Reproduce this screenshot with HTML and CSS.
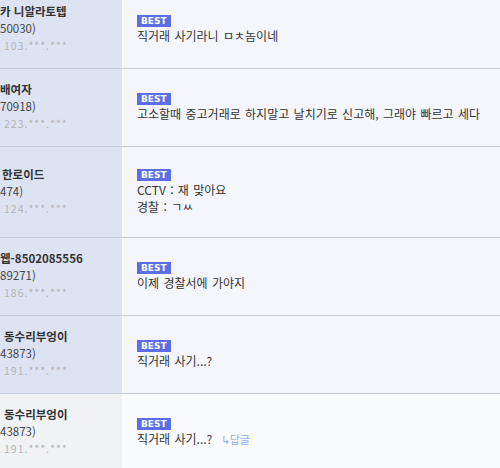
FILE: index.html
```html
<!DOCTYPE html>
<html lang="ko">
<head>
<meta charset="utf-8">
<title>댓글</title>
<link rel="stylesheet" href="styles.css">
</head>
<body>
<div class="comments">
  <div class="row">
    <div class="user">
      <div class="nick">카 니알라토텝</div>
      <div class="uid">50030)</div>
      <div class="ip">103.***.***</div>
    </div>
    <div class="body">
      <span class="badge">BEST</span>
      <p class="text">직거래 사기라니 ㅁㅊ놈이네</p>
    </div>
  </div>
  <div class="row">
    <div class="user">
      <div class="nick">배여자</div>
      <div class="uid">70918)</div>
      <div class="ip">223.***.***</div>
    </div>
    <div class="body">
      <span class="badge">BEST</span>
      <p class="text">고소할때 중고거래로 하지말고 날치기로 신고해, 그래야 빠르고 세다</p>
    </div>
  </div>
  <div class="row">
    <div class="user">
      <div class="nick nick-in">한로이드</div>
      <div class="uid">474)</div>
      <div class="ip">124.***.***</div>
    </div>
    <div class="body">
      <span class="badge">BEST</span>
      <p class="text">CCTV : 재 맞아요<br>경찰 : ㄱㅆ</p>
    </div>
  </div>
  <div class="row">
    <div class="user">
      <div class="nick">웹-8502085556</div>
      <div class="uid">89271)</div>
      <div class="ip">186.***.***</div>
    </div>
    <div class="body">
      <span class="badge">BEST</span>
      <p class="text">이제 경찰서에 가야지</p>
    </div>
  </div>
  <div class="row">
    <div class="user">
      <div class="nick nick-in2">동수리부엉이</div>
      <div class="uid">43873)</div>
      <div class="ip">191.***.***</div>
    </div>
    <div class="body">
      <span class="badge">BEST</span>
      <p class="text">직거래 사기...?</p>
    </div>
  </div>
  <div class="row plain">
    <div class="user">
      <div class="nick nick-in2">동수리부엉이</div>
      <div class="uid">43873)</div>
      <div class="ip">191.***.***</div>
    </div>
    <div class="body">
      <span class="badge">BEST</span>
      <p class="text">직거래 사기...? <a class="reply" href="#">↳답글</a></p>
    </div>
  </div>
</div>
</body>
</html>
```

FILE: styles.css
```css
html, body {
  margin: 0;
  padding: 0;
}
body {
  background: #fafbfc;
  font-family: "Noto Sans CJK KR", "Noto Sans", sans-serif;
  overflow: hidden;
}
.comments {
  margin-top: -9px;
}
.row {
  display: grid;
  grid-template-columns: 122px 1fr;
  border-bottom: 1px solid #c7cbd8;
}
.user {
  background: #dee3f4;
  padding: 12px 0 14px;
  display: flex;
  flex-direction: column;
  justify-content: center;
  overflow: hidden;
  white-space: nowrap;
}
.user div {
  line-height: 17px;
}
.nick {
  font-weight: bold;
  font-size: 11.5px;
  color: #333;
}
.nick-in {
  padding-left: 2px;
}
.nick-in2 {
  padding-left: 4px;
}
.uid {
  font-size: 11.5px;
  color: #444;
}
.ip {
  font-size: 10.5px;
  color: #b4b4b4;
  padding-left: 4px;
  letter-spacing: 1px;
}
.body {
  background: #f4f6fc;
  border-left: 2px solid #f9faff;
  padding: 22px 0 22px 13px;
  display: flex;
  flex-direction: column;
  justify-content: center;
  align-items: flex-start;
}
.badge {
  background: #5c6de6;
  color: #fff;
  font-family: "DejaVu Sans", sans-serif;
  font-weight: bold;
  font-size: 9px;
  height: 12px;
  line-height: 12px;
  padding: 0 4px;
}
.text {
  margin: 0;
  font-size: 12px;
  line-height: 17px;
  color: #333;
  word-spacing: 1px;
  white-space: nowrap;
}
.reply {
  color: #8fb3e8;
  font-size: 11px;
  text-decoration: none;
  margin-left: 4px;
}
.plain .user {
  background: #f1f2f4;
}
.plain .body {
  background: #fafbfc;
  border-left-color: #fcfcfd;
}
```
